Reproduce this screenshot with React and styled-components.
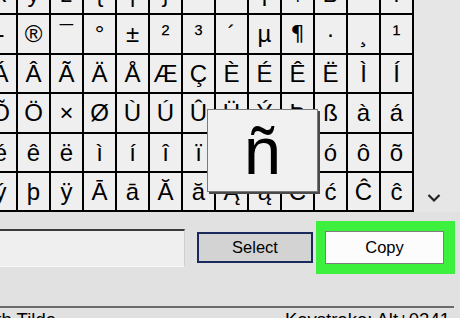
import React from "react";
import styled, { createGlobalStyle } from "styled-components";

const Global = createGlobalStyle`
  html, body { margin: 0; padding: 0; background: #e1e1e1; }
  body { font-family: "Liberation Sans", "DejaVu Sans", Arial, sans-serif; }
`;

const Window = styled.div`
  width: 460px;
  height: 318px;
  overflow: hidden;
  background: #e1e1e1;
  display: flex;
  flex-direction: column;
`;

const Top = styled.div`
  display: flex;
  height: 212px;
  flex: none;
`;

const Viewport = styled.div`
  position: relative;
  width: 414px;
  height: 212px;
  overflow: hidden;
  flex: none;
`;

const Grid = styled.div`
  display: grid;
  grid-template-columns: repeat(13, 31px);
  grid-template-rows: 38px 38px 37px 38px 37px 37px;
  gap: 2px;
  padding: 0 2px 2px 0;
  margin: -25px 0 0 -15px;
  background: #000;
  width: max-content;
`;

const Cell = styled.div`
  background: #efefef;
  display: flex;
  align-items: center;
  justify-content: center;
  font-family: ${(p) =>
    p.$alt ? '"DejaVu Sans", sans-serif' : '"Liberation Sans", "DejaVu Sans", sans-serif'};
  font-size: ${(p) => (p.$alt ? 22 : 24)}px;
  color: #000;
  line-height: 1;
`;

const Popup = styled.div`
  position: absolute;
  left: 207px;
  top: 109px;
  width: 109px;
  height: 81px;
  border: 1px solid #7a7a7a;
  box-shadow: 2px 2px 0 #4a4a4a;
  background: #f1f1f1;
  display: flex;
  align-items: center;
  justify-content: center;
  font-size: 67px;
  color: #000;
  line-height: 1;
`;

const ScrollBar = styled.div`
  flex: 1;
  background: #e6e6e6;
  display: flex;
  align-items: flex-end;
  justify-content: center;
  padding-bottom: 9px;
  padding-right: 6px;
`;

const Controls = styled.div`
  display: flex;
  align-items: center;
  height: 53px;
  margin-top: 9px;
  flex: none;
`;

const TextBox = styled.div`
  width: 185px;
  height: 38px;
  flex: none;
  background: #efefef;
  border-top: 2px solid #3a3a3a;
  border-bottom: 1px solid #f8f8f8;
  border-right: 1px solid #cfcfcf;
  box-sizing: border-box;
`;

const Button = styled.div`
  box-sizing: border-box;
  display: flex;
  align-items: center;
  justify-content: center;
  font-size: 16.5px;
  color: #000;
  flex: none;
  width: ${(p) => p.$w}px;
  height: ${(p) => p.$h}px;
  background: ${(p) => (p.$primary ? "#fcfcfc" : "#d3d3d3")};
  border: ${(p) => (p.$primary ? "1px solid #7d7d7d" : "2px solid #1b2a5c")};
`;

const SelectWrap = styled.div`
  margin-left: 12px;
  flex: none;
`;

const Highlight = styled.div`
  margin-left: 3px;
  width: 139px;
  height: 53px;
  box-sizing: border-box;
  background: #3df03d;
  padding: 10px 11px 10px 9px;
  flex: none;
`;

const Status = styled.div`
  margin-top: 32px;
  width: 454px;
  border-top: 2px solid #6b6b6b;
  display: flex;
  justify-content: space-between;
  font-size: 18.5px;
  color: #000;
  white-space: nowrap;
  padding-top: 1px;
  line-height: 21px;
`;

const NameClip = styled.div`
  width: 56px;
  overflow: hidden;
  display: flex;
  justify-content: flex-end;
`;

const Keys = styled.div`
  padding-right: 4px;
`;

const rows = [
  ["x", "y", "z", "{", "|", "}", "~", "\u00A0", "¡", "¢", "£", "¤", "¥"],
  ["-", "®", "¯", "°", "±", "²", "³", "´", "µ", "¶", "·", "¸", "¹"],
  ["Á", "Â", "Ã", "Ä", "Å", "Æ", "Ç", "È", "É", "Ê", "Ë", "Ì", "Í"],
  ["Õ", "Ö", "×", "Ø", "Ù", "Ú", "Û", "Ü", "Ý", "Þ", "ß", "à", "á"],
  ["é", "ê", "ë", "ì", "í", "î", "ï", "ð", "ñ", "ò", "ó", "ô", "õ"],
  ["ý", "þ", "ÿ", "Ā", "ā", "Ă", "ă", "Ą", "ą", "Ć", "ć", "Ĉ", "ĉ"],
];

export default function App() {
  return (
    <>
      <Global />
      <Window>
        <Top>
          <Viewport>
            <Grid>
              {rows.flatMap((r, i) =>
                r.map((c, j) => (
                  <Cell key={`${i}-${j}`} $alt={c === "¶"}>
                    {c}
                  </Cell>
                ))
              )}
            </Grid>
            <Popup>ñ</Popup>
          </Viewport>
          <ScrollBar>
            <svg width="14" height="10" viewBox="0 0 14 10">
              <polyline
                points="1.5,2 7,7.5 12.5,2"
                fill="none"
                stroke="#222"
                strokeWidth="2.2"
              />
            </svg>
          </ScrollBar>
        </Top>
        <Controls>
          <TextBox />
          <SelectWrap>
            <Button $w={116} $h={31}>Select</Button>
          </SelectWrap>
          <Highlight>
            <Button $primary $w={119} $h={33}>Copy</Button>
          </Highlight>
        </Controls>
        <Status>
          <NameClip>
            <span>U+00F1: Latin Small Letter N With Tilde</span>
          </NameClip>
          <Keys>Keystroke: Alt+0241</Keys>
        </Status>
      </Window>
    </>
  );
}
